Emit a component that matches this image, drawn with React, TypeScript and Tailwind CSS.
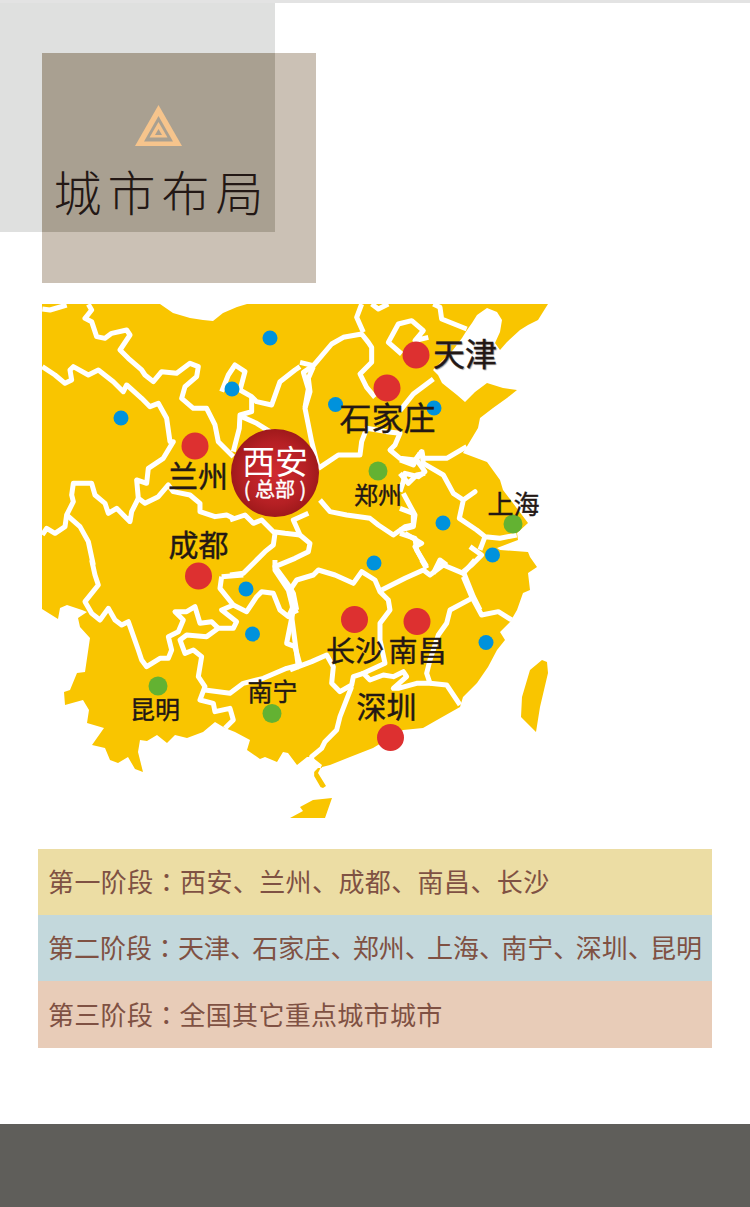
const cjk = "font-['Noto_Sans_CJK_SC','Noto_Sans',sans-serif]";

// mainland outline, page coordinates shifted by the svg viewBox
const mainland =
  "42,304 160,304 173,313 190,318 203,320 213,321 223,313 237,307 247,304 548,304 538,320 528,325 520,330 507,342 500,350 495,343 500,332 502,320 497,312 487,308 477,315 472,323 467,330 462,338 453,350 433,370 438,375 442,383 457,395 465,402 475,392 487,383 503,388 517,390 507,398 493,408 480,418 478,428 463,453 487,462 500,480 503,490 528,523 517,533 518,540 497,548 500,550 528,552 530,557 537,567 528,573 530,590 523,593 517,610 510,622 500,632 505,640 497,650 488,667 477,683 463,697 460,707 437,720 423,728 403,730 373,748 350,757 330,765 318,768 313,773 315,785 323,788 326,786 318,773 322,765 312,757 307,757 297,765 288,753 283,752 277,762 265,757 260,759 247,750 250,740 235,732 225,728 215,722 203,732 187,738 175,735 167,743 157,735 147,741 140,740 138,752 143,772 135,769 128,757 118,763 110,760 105,748 92,745 104,728 87,723 89,710 83,700 65,705 64,692 70,690 77,673 85,672 90,638 80,627 78,618 87,612 82,610 67,605 60,608 58,619 42,609";
const taiwan = "547,662 542,660 530,670 522,697 521,717 536,732 540,707 548,673";
const hainan = "332,798 313,800 300,807 303,811 290,818 325,818";

// province borders, traced on 3x crops of the map
const northWest = [
  "37,42 60,45 110,30",
  "175,28 185,45 165,70 185,80 200,125 225,130 245,115 290,105 300,120 270,165 295,190 335,225 345,240 370,260 395,230 440,235 480,205 505,215 500,245 465,275 455,310 490,340 530,340 555,390 565,440 610,485",
  "37,215 75,240 105,265 125,255 120,225 130,215 175,240 205,225 250,260 280,290 290,270 335,310 360,335 385,325 410,370 420,440 430,440 400,490 355,520 350,565 320,555 325,610 345,625 385,605 415,570 430,590 480,600 510,625 510,650 555,665 590,660 610,670",
  "325,610 305,650 300,680 285,665 260,640 235,655 225,625 195,600 185,565 130,565 125,600 130,620 110,660 105,695 75,715 50,700 37,720",
  "110,660 150,695 175,740 190,810",
  "575,290 595,240 615,210 645,230 630,285 665,305 680,320 725,330 750,260 795,225 810,215",
  "665,305 665,350 630,360 628,400 610,470",
  "635,365 680,385 720,410",
];
const shanxiHenan = [
  "70,215 55,250 60,290 45,340 65,440 85,520",
  "85,520 145,480 210,480 215,440 230,400 290,410 330,415 315,450 300,465 330,490 375,495 395,470 400,490 470,490 530,455",
  "380,495 405,530 385,545 345,535 340,560 330,590",
];
const hebei = [
  "0,175 40,185 95,120 130,100 185,90 205,115 215,130 215,175 180,210 200,250 225,280",
  "185,0 170,40 190,85",
  "40,185 10,205 25,255 15,310",
  "305,150 265,115 295,60 335,50 370,80 345,110 385,100",
  "400,0 420,10 425,45 500,75",
  "215,0 235,15 265,0",
  "300,320 340,270 400,225",
];
const hubei = [
  "0,90 45,75 70,100 95,90 130,125 165,130 210,135",
  "135,130 130,165 105,185 75,215 40,250 0,255",
  "235,70 190,90 210,135 240,160 235,185 195,205 135,230 175,285 190,310 200,360",
  "270,30 300,65 350,75 420,85 445,105 490,135 525,110 550,105 550,70 510,55",
  "525,130 575,160 555,170 590,235",
];
const anhui = [
  "0,30 40,45 60,10",
  "65,0 70,40 130,75 160,130 190,150 225,125 190,150 178,205 230,240 255,260 300,265 350,255",
  "255,260 240,300",
  "0,70 25,100 50,75 75,70",
  "10,130 45,195 40,230 0,240",
  "0,250 45,265 50,300 80,350",
  "190,365 215,345 245,315 210,290",
  "190,365 220,440 240,480",
  "100,370 120,330 140,345",
];
const southWest = [
  "185,0 195,45 205,75 165,125 185,160 210,180 235,145 255,180 275,195 295,185 325,270 335,300 350,320 390,295 415,295 425,270 415,230 445,215 460,180 435,155 470,155 495,140 510,190 545,185 565,205",
  "575,50 640,45",
  "575,50 570,85 610,135 575,150 620,185 610,205 565,205 530,230 470,225 450,240 465,280 490,270 515,290 505,350 525,380 510,420 550,430 555,455 600,445 610,480 585,505",
  "610,135 650,155 680,110 695,95 730,100 750,150 775,170 790,140 800,160",
  "525,390 600,400 640,370 700,355 770,325 810,315",
  "735,0 735,30 775,90 790,150 770,250 795,260 810,315",
];
const southEast = [
  "0,90 20,60 70,45 85,30 135,45 190,70 215,35 255,60 270,95 295,120 300,150 270,190 270,240 285,310 220,340 240,360 280,345 310,350 340,335 350,350 310,385 325,385 380,370 420,370 410,340 420,300 445,225 470,190 480,150 545,115",
  "10,100 5,170 25,320 65,305 110,285 130,320 125,370 150,395 185,375 190,350 220,340",
  "275,90 345,55 400,30 420,45 460,15 520,40 555,0",
  "520,50 545,110 575,165 625,155 665,180",
  "420,370 470,375 510,435",
  "185,380 150,470 140,510 105,545 95,565 65,590 65,650 85,685",
  "395,0 410,25",
  "0,330 25,320",
];

function Borders({ lines, x, y }: { lines: string[]; x: number; y: number }) {
  return (
    <g transform={`translate(${x} ${y}) scale(0.3333)`}>
      {lines.map((points) => (
        <polyline key={points} points={points} fill="none" stroke="#fff" strokeWidth="15" strokeLinejoin="round" />
      ))}
    </g>
  );
}

const blueDots = [[270, 338], [232, 389], [121, 418], [335.5, 404.5], [434, 408], [443, 523], [374, 563], [492.5, 555], [246, 589], [252.5, 634], [486, 642.5]];
const redDots = [[416, 355], [387, 388], [195, 446], [198.5, 576], [354.5, 619.5], [417, 621.5], [390.5, 737.5]];
const greenDots = [[378, 471], [513, 524], [158, 686], [272, 713.5]];

function MapDrawing() {
  return (
    <svg viewBox="0 304 750 516" className="block h-[516px] w-[750px]">
      <polygon points={mainland} fill="#f9c500" />
      <polygon points={taiwan} fill="#f9c500" />
      <polygon points={hainan} fill="#f9c500" />
      <Borders lines={northWest} x={30} y={295} />
      <Borders lines={shanxiHenan} x={290} y={295} />
      <Borders lines={hebei} x={300} y={304} />
      <Borders lines={hubei} x={230} y={490} />
      <Borders lines={anhui} x={400} y={450} />
      <Borders lines={southWest} x={30} y={560} />
      <Borders lines={southEast} x={290} y={560} />
      {blueDots.map(([x, y]) => <circle key={`${x}-${y}`} cx={x} cy={y} r="7.5" fill="#0092dc" />)}
      {redDots.map(([x, y]) => <circle key={`${x}-${y}`} cx={x} cy={y} r="13.5" fill="#dd3030" />)}
      {greenDots.map(([x, y]) => <circle key={`${x}-${y}`} cx={x} cy={y} r="9.5" fill="#63b232" />)}
    </svg>
  );
}

const labelClass =
  "absolute -translate-x-1/2 -translate-y-1/2 whitespace-nowrap leading-none text-[#231815] [-webkit-text-stroke:0.4px_#231815]";

// the colon sits centred in the cell in the reference, as in the TC cut
const colon = "font-['Noto_Sans_CJK_TC',sans-serif]";
const tightComma = "tracking-[-3.7px]";

export default function App() {
  return (
    <div className={`flex h-[1207px] w-[750px] flex-col overflow-hidden bg-white ${cjk}`}>
      <div className="h-[3px] bg-[#e3e3e3]" />

      <div className="h-[301px]">
        <div className="relative h-[229px] w-[275px] bg-[#dfe0df]">
          <div className="absolute left-[42px] top-[50px] h-[230px] w-[274px] bg-[#cbc1b5]">
            <div className="flex h-[179px] w-[233px] flex-col items-center bg-[#a9a091] pt-[52px]">
              <svg viewBox="0 0 47 41" className="h-[41px] w-[47px]">
                <polygon points="23.5,0 0,41 47,41" fill="#f6c48c" />
                <polygon points="23.5,11 9,36.5 38,36.5" fill="#a9a091" />
                <polygon points="23.5,17 14.5,32.5 32.5,32.5" fill="#f6c48c" />
                <polygon points="23.5,24 20,30 27,30" fill="#a9a091" />
              </svg>
              <div className="mt-[18px] whitespace-nowrap pl-[6px] text-[48px] font-extralight leading-[52px] tracking-[6px] text-[#231815]">
                城市布局
              </div>
            </div>
          </div>
        </div>
      </div>

      <div className="relative h-[516px] w-[750px]">
        <MapDrawing />
        <span className={`${labelClass} left-[465px] top-[48px] text-[32px] [text-shadow:1px_1px_1px_#999]`}>天津</span>
        <span className={`${labelClass} left-[387.5px] top-[112px] text-[32px]`}>石家庄</span>
        <span className={`${labelClass} left-[198px] top-[170px] text-[30px]`}>兰州</span>
        <span className={`${labelClass} left-[198.5px] top-[239px] text-[30px]`}>成都</span>
        <span className={`${labelClass} left-[378px] top-[190px] text-[24px]`}>郑州</span>
        <span className={`${labelClass} left-[513.5px] top-[199px] text-[26px]`}>上海</span>
        <span className={`${labelClass} left-[355px] top-[345px] text-[29px]`}>长沙</span>
        <span className={`${labelClass} left-[417.5px] top-[345px] text-[29px]`}>南昌</span>
        <span className={`${labelClass} left-[272.5px] top-[386px] text-[25px]`}>南宁</span>
        <span className={`${labelClass} left-[155px] top-[404px] text-[25px]`}>昆明</span>
        <span className={`${labelClass} left-[386.5px] top-[401px] text-[30px]`}>深圳</span>

        <div className="absolute left-[231px] top-[125px] flex h-[88px] w-[88px] flex-col items-center rounded-full bg-[radial-gradient(circle,#d02a30_0%,#b52024_50%,#81100f_100%)] pt-[13px] text-white">
          <span className="text-[33px] leading-[36px]">西安</span>
          <span className="whitespace-nowrap text-[20px] leading-[22px] [-webkit-text-stroke:0.4px_#fff]">( 总部 )</span>
        </div>
      </div>

      <div className="ml-[38px] mt-[29px] flex w-[674px] flex-col text-[26px] text-[#7f5143]">
        <div className="flex h-[66px] items-center bg-[#ecdda4] pb-[3px] pl-[10px] tracking-[0.4px]">
          <span>第一阶段<span className={colon}>：</span>西安、兰州、成都、南昌、长沙</span>
        </div>
        <div className="flex h-[66px] items-center whitespace-nowrap bg-[#c3d8dc] pb-[3px] pl-[10px]">
          <span>
            第二阶段<span className={colon}>：</span>天津<span className={tightComma}>、</span>石家庄<span className={tightComma}>、</span>郑州<span className={tightComma}>、</span>上海<span className={tightComma}>、</span>南宁<span className={tightComma}>、</span>深圳<span className={tightComma}>、</span>昆明
          </span>
        </div>
        <div className="flex h-[67px] items-center bg-[#e8ccb8] pb-[3px] pl-[10px] tracking-[0.3px]">
          <span>第三阶段<span className={colon}>：</span>全国其它重点城市城市</span>
        </div>
      </div>

      <div className="mt-auto h-[83px] bg-[#5f5e5a]" />
    </div>
  );
}
